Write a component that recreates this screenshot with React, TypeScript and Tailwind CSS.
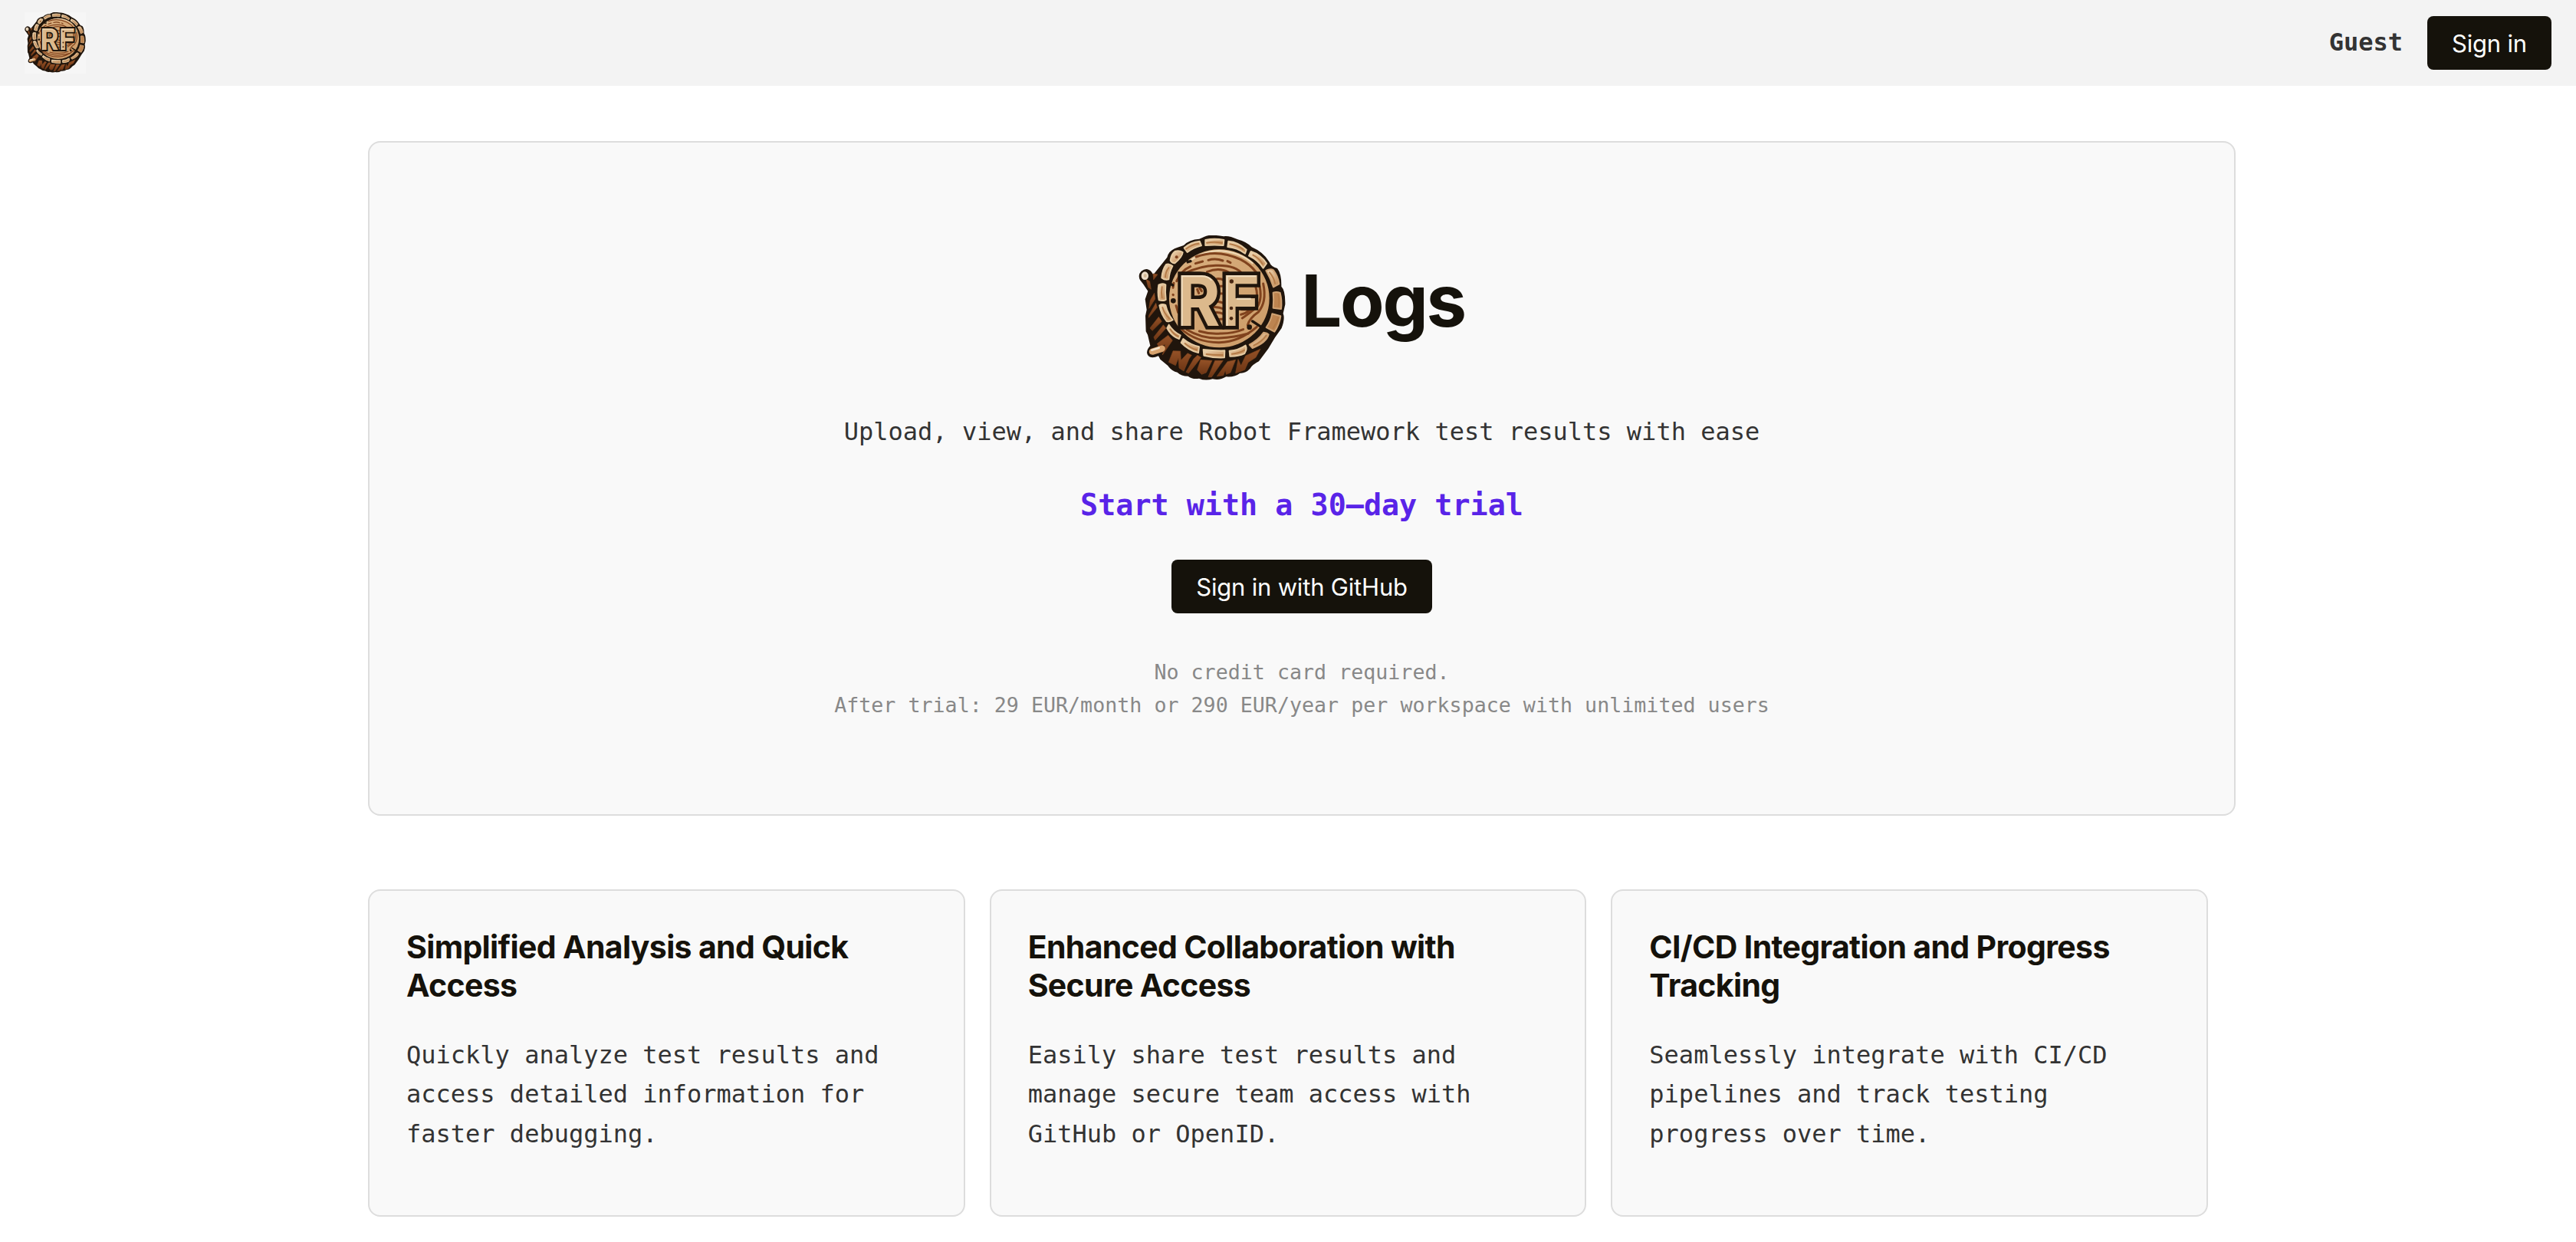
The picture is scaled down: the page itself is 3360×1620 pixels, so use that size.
const ringPlates = [
  'M334 98Q369 90 406 98L404 119Q369 116 334 119Z',
  'M424 103Q462 106 494 136L489 151Q458 128 421 125Z',
  'M512 143Q550 155 573 190L560 208Q540 177 504 160Z',
  'M571 218Q588 209 600 216Q618 240 622 270L600 282Q590 250 571 218Z',
  'M599 304Q613 300 626 305Q634 335 630 368L599 364Q602 332 599 304Z',
  'M595 387L628 396Q623 430 604 457L572 440Q590 415 595 387Z',
  'M506 508Q540 490 562 460Q576 462 581 468Q573 500 518 521Z',
  'M428 532Q464 530 491 511Q498 524 487 542Q460 554 430 553Z',
  'M326 527Q368 532 409 531L408 558Q366 560 328 550Z',
  'M247 485Q275 508 309 516L306 539Q268 530 239 500Z',
  'M191 430Q207 456 236 471L231 485Q200 474 184 443Z',
  'M154 354Q165 347 178 353Q185 386 206 411Q196 419 182 416Q160 388 154 354Z',
  'M151 274Q165 266 178 273Q175 304 179 332Q166 338 152 333Q146 303 151 274Z',
  'M163 246Q165 214 180 194Q193 190 205 200Q192 225 190 252Q176 256 163 246Z',
  'M197 178Q200 153 216 142Q232 138 245 146Q244 163 214 189Q201 188 197 178Z',
  'M251 129Q276 106 311 103L318 120Q288 127 263 146Z',
];

const plateGrain = [
  'M339 109Q369 103 399 109',
  'M430 114Q456 118 481 134',
  'M520 157Q545 170 557 192',
  'M585 225Q602 245 606 268',
  'M619 312Q624 338 620 358',
  'M619 402Q612 425 599 443',
  'M523 511Q553 498 572 472',
  'M438 544Q465 542 486 529',
  'M338 545Q368 549 401 548',
  'M254 503Q276 522 300 528',
  'M196 447Q209 466 226 475',
  'M166 362Q174 388 192 405',
  'M164 282Q160 304 164 324',
  'M177 243Q178 222 190 207',
  'M258 133Q281 115 307 112',
];

const barkStreaks = [
  'M134 306L118 334L113 366L137 329Z',
  'M140 345L113 393L112 402L145 362Z',
  'M151 399L117 443L126 453L163 417Z',
  'M169 430L132 478L137 490L180 443Z',
  'M188 471L145 504L151 517L176 507L166 548L205 491Z',
  'M207 532L190 576L217 589L228 561L231 599L249 611L270 563L280 549L264 541L238 569L236 533Z',
  'M288 563L258 615L268 619L289 594L317 558L303 549Z',
  'M315 567L302 606L319 624L337 617L360 570Z',
  'M371 570L345 634L358 634L403 570Z',
  'M420 574L379 631L404 628L412 607L415 624L432 617L452 567Z',
  'M462 565L452 619L488 606L501 577L531 558L549 525L491 551L473 590Z',
  'M129 230L131 253L147 233Z',
  'M102 252L110 283L121 291L116 260Z',
];

const woodRings = [
  'M297 164Q380 132 471 174Q510 194 532 224',
  'M221 259Q239 218 275 202M295 190L323 182M345 177Q373 168 402 179M420 181L432 187',
  'M250 230Q320 196 381 198Q453 197 480 233',
  'M340 223Q387 204 424 224',
  'M210 267L207 285M207 312L208 313M219 355L227 382',
  'M560 269Q575 340 541 380Q507 403 499 431',
  'M544 270Q558 326 538 358Q504 387 478 404',
  'M530 278Q542 320 530 350',
  'M235 443Q299 500 388 499Q467 497 535 438',
  'M261 449Q319 484 387 482Q449 479 502 464',
  'M310 455Q350 467 393 464Q440 465 482 448',
  'M362 361Q382 358 409 369M363 384Q382 378 404 387M379 409L404 407M353 337Q383 337 402 344',
  'M378 250Q394 248 407 256M385 279L403 279M386 307L402 308',
  'M302 291L308 306M311 286L319 298',
  'M476 370L520 370M473 390Q492 386 506 373',
];

const outline =
  'M330 85Q350 74 405 84Q425 80 460 96Q495 105 515 126Q560 145 584 184Q591 203 615 209Q632 230 631 280Q647 295 646 350L638 385Q646 407 632 443L606 480L580 523L543 573Q517 586 508 602Q490 621 469 619Q448 636 415 633Q390 649 362 642Q333 650 309 640Q284 645 266 631Q239 631 224 616Q202 611 187 590L157 565L150 552Q120 565 108 548Q99 532 118 512L108 469L101 456L99 395L104 371L98 330L109 298L91 271L78 255Q68 234 83 220Q105 202 123 223L130 234L184 166Q191 137 225 127L249 119Q270 96 310 94Z';

function LogLogo({ className }: { className: string }) {
  return (
    <svg viewBox="72 80 576 576" className={className} role="img" aria-label="RF Logs">
      <defs>
        <linearGradient id="plate" x1="0" y1="0" x2="1" y2="1">
          <stop offset="0" stopColor="#f0dcbc" />
          <stop offset="0.5" stopColor="#d9b084" />
          <stop offset="1" stopColor="#bd8450" />
        </linearGradient>
        <linearGradient id="bark" x1="0" y1="0" x2="0" y2="1">
          <stop offset="0" stopColor="#955227" />
          <stop offset="1" stopColor="#6d3514" />
        </linearGradient>
        <linearGradient id="face" x1="0" y1="0" x2="1" y2="1">
          <stop offset="0" stopColor="#d9b080" />
          <stop offset="1" stopColor="#cc9b67" />
        </linearGradient>
      </defs>
      <rect x="72" y="80" width="576" height="576" fill="#fbfbfb" fillOpacity="0.4" />
      <path d={outline} fill="#20150c" />
      {barkStreaks.map((d) => (
        <path key={d} d={d} fill="url(#bark)" stroke="#7c421d" strokeWidth="2" strokeLinejoin="round" />
      ))}
      <ellipse cx="97" cy="238" rx="14" ry="16" fill="#ecdcc6" />
      <ellipse cx="98" cy="238" rx="6" ry="7" fill="#d4b995" />
      <path d="M126 535L164 523" stroke="#d8a36d" strokeWidth="25" strokeLinecap="round" />
      <path d="M124 529L152 520" stroke="#f3e2cb" strokeWidth="8" strokeLinecap="round" />
      <ellipse cx="388" cy="327" rx="196" ry="192" fill="url(#face)" />
      <path d="M268 186Q310 145 385 140Q465 143 520 190" fill="none" stroke="#eedab8" strokeWidth="6" />
      {woodRings.map((d) => (
        <path key={d} d={d} fill="none" stroke="#80421d" strokeWidth="9" strokeLinecap="round" strokeLinejoin="round" />
      ))}
      {ringPlates.map((d, i) => (
        <path
          key={d}
          d={d}
          fill={i === 4 || i === 5 ? '#bd8450' : 'url(#plate)'}
          stroke={i >= 3 && i <= 6 ? '#cfa273' : '#e6cba2'}
          strokeWidth="6"
          strokeLinejoin="round"
        />
      ))}
      {plateGrain.map((d) => (
        <path key={d} d={d} fill="none" stroke="#b57c48" strokeWidth="6" strokeLinecap="round" />
      ))}
      <circle cx="221" cy="165" r="6" fill="#80421d" />
      <path d="M190 265L206 275M256 166L265 184L276 181M518 416L570 450" fill="none" stroke="#20150c" strokeWidth="10" strokeLinecap="round" />
      <circle cx="208" cy="336" r="10" fill="#20150c" />
      <circle cx="506" cy="439" r="10" fill="#20150c" />
      <g
        fontFamily="Inter, sans-serif"
        fontWeight="700"
        fontSize="272"
        stroke="#20150c"
        strokeWidth="28"
        strokeLinejoin="miter"
        paintOrder="stroke"
        fill="#dcb98c"
      >
        <text x="222" y="435" textLength="170" lengthAdjust="spacingAndGlyphs">R</text>
        <text x="397" y="435" textLength="150" lengthAdjust="spacingAndGlyphs">F</text>
      </g>
      <path d="M242 434V240H320Q345 240 358 256M419 434V240H532M456 328H512" fill="none" stroke="#f1dfc2" strokeWidth="6" />
      <g fill="#4a2813">
        <circle cx="436" cy="260" r="8" />
        <circle cx="435" cy="365" r="7" />
        <circle cx="435" cy="405" r="7" />
      </g>
    </svg>
  );
}

const features = [
  {
    title: ['Simplified Analysis and Quick', 'Access'],
    body: ['Quickly analyze test results and', 'access detailed information for', 'faster debugging.'],
  },
  {
    title: ['Enhanced Collaboration with', 'Secure Access'],
    body: ['Easily share test results and', 'manage secure team access with', 'GitHub or OpenID.'],
  },
  {
    title: ['CI/CD Integration and Progress', 'Tracking'],
    body: ['Seamlessly integrate with CI/CD', 'pipelines and track testing', 'progress over time.'],
  },
];

export default function App() {
  return (
    <div className="h-[1620px] w-full overflow-hidden bg-white font-['DejaVu_Sans_Mono',monospace] text-[32px] leading-[51.4px] text-[#333333]">
      <header className="flex h-28 items-center justify-between bg-[#f3f3f3] px-8">
        <LogLogo className="size-20" />
        <div className="flex items-center gap-8">
          <span className="font-bold">Guest</span>
          <button className="h-[70px] w-[162px] rounded-lg bg-[#15120b] pt-px font-['Inter',sans-serif] text-[31px] tracking-[-0.006em] text-white">
            Sign in
          </button>
        </div>
      </header>

      <main className="ml-[480px] mt-[72px] w-[2436px]">
        <section className="flex h-[880px] flex-col items-center rounded-2xl border-2 border-[#dddddd] bg-[#f9f9f9] pt-[121px] text-center">
          <div className="flex items-start gap-5">
            <LogLogo className="size-48" />
            <h1 className="mt-[29px] font-['Inter',sans-serif] text-[94px] font-bold leading-[112px] tracking-[-0.025em] text-[#15120b]">
              Logs
            </h1>
          </div>
          <p className="mt-[39px]">Upload, view, and share Robot Framework test results with ease</p>
          <p className="mt-[39px] text-[38.4px] font-bold leading-[61.4px] text-[#5924e8]">Start with a 30–day trial</p>
          <button className="mt-10 h-[70px] w-[340px] shrink-0 rounded-lg bg-[#15120b] pt-px font-['Inter',sans-serif] text-[31px] tracking-[-0.006em] text-white">
            Sign in with GitHub
          </button>
          <p className="mt-[55px] text-[26.67px] leading-[43px] text-[#888888]">
            No credit card required.
            <br />
            After trial: 29 EUR/month or 290 EUR/year per workspace with unlimited users
          </p>
        </section>

        <section className="mt-24 grid w-[2400px] grid-cols-3 gap-8">
          {features.map((f) => (
            <article key={f.title[0]} className="h-[427px] rounded-2xl border-2 border-[#dddddd] bg-[#f9f9f9] p-12">
              <h2 className="whitespace-nowrap font-['Inter',sans-serif] text-[41px] font-bold leading-[50px] tracking-[-0.016em] text-[#15120b]">
                {f.title[0]}
                <br />
                {f.title[1]}
              </h2>
              <p className="mt-[41px] whitespace-nowrap">
                {f.body[0]}
                <br />
                {f.body[1]}
                <br />
                {f.body[2]}
              </p>
            </article>
          ))}
        </section>
      </main>
    </div>
  );
}
